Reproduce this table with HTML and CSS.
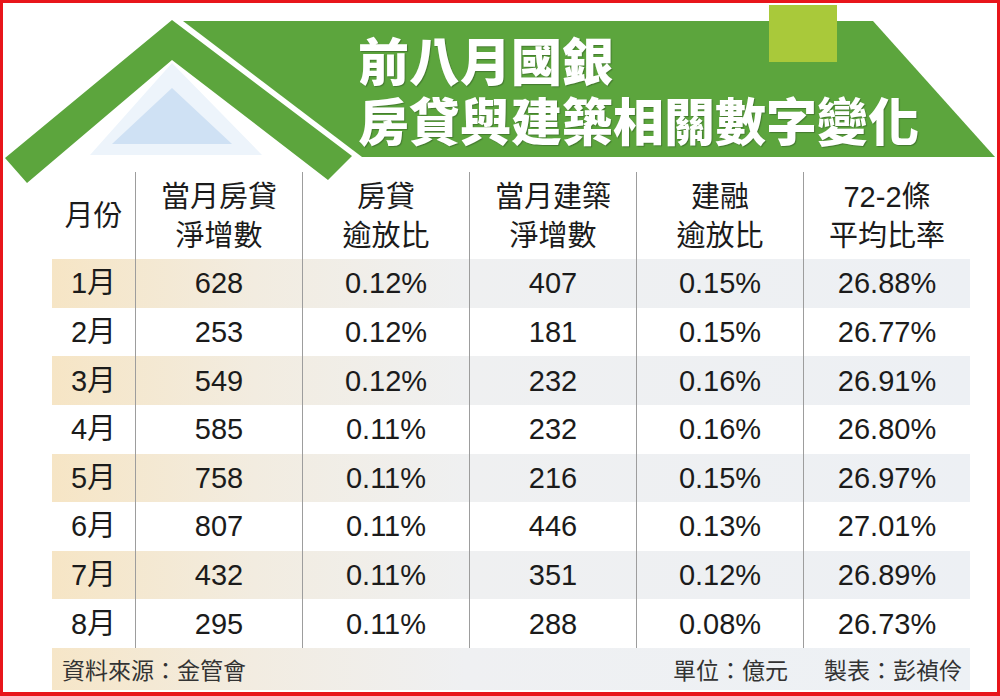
FILE: index.html
```html
<!DOCTYPE html>
<html lang="zh-Hant">
<head>
<meta charset="utf-8">
<title>前八月國銀房貸與建築相關數字變化</title>
<link rel="stylesheet" href="styles.css">
</head>
<body>
<div class="frame">
  <div class="hero">
    <svg class="roof" viewBox="3 3 994 169" width="994" height="169">
      <polygon class="banner" points="183,21 873,21 995,157 362,157"/>
      <rect class="chimney" x="769" y="5" width="68" height="57"/>
      <polygon class="band" points="5,158 172,20 352,156 328,180 172,60 27,183"/>
      <polygon class="glass-outer" points="172,63 262,155 90,155"/>
      <polygon class="glass-inner" points="172,88 232,144 112,144"/>
    </svg>
    <h1 class="title"><span class="line">前八月國銀</span><span class="line">房貸與建築相關數字變化</span></h1>
  </div>
  <div class="table">
    <div class="row head">
      <div class="cell">月份</div>
      <div class="cell">當月房貸<br>淨增數</div>
      <div class="cell">房貸<br>逾放比</div>
      <div class="cell">當月建築<br>淨增數</div>
      <div class="cell">建融<br>逾放比</div>
      <div class="cell">72-2條<br>平均比率</div>
    </div>
    <div class="row odd">
      <div class="cell">1月</div><div class="cell">628</div><div class="cell">0.12%</div><div class="cell">407</div><div class="cell">0.15%</div><div class="cell">26.88%</div>
    </div>
    <div class="row">
      <div class="cell">2月</div><div class="cell">253</div><div class="cell">0.12%</div><div class="cell">181</div><div class="cell">0.15%</div><div class="cell">26.77%</div>
    </div>
    <div class="row odd">
      <div class="cell">3月</div><div class="cell">549</div><div class="cell">0.12%</div><div class="cell">232</div><div class="cell">0.16%</div><div class="cell">26.91%</div>
    </div>
    <div class="row">
      <div class="cell">4月</div><div class="cell">585</div><div class="cell">0.11%</div><div class="cell">232</div><div class="cell">0.16%</div><div class="cell">26.80%</div>
    </div>
    <div class="row odd">
      <div class="cell">5月</div><div class="cell">758</div><div class="cell">0.11%</div><div class="cell">216</div><div class="cell">0.15%</div><div class="cell">26.97%</div>
    </div>
    <div class="row">
      <div class="cell">6月</div><div class="cell">807</div><div class="cell">0.11%</div><div class="cell">446</div><div class="cell">0.13%</div><div class="cell">27.01%</div>
    </div>
    <div class="row odd">
      <div class="cell">7月</div><div class="cell">432</div><div class="cell">0.11%</div><div class="cell">351</div><div class="cell">0.12%</div><div class="cell">26.89%</div>
    </div>
    <div class="row">
      <div class="cell">8月</div><div class="cell">295</div><div class="cell">0.11%</div><div class="cell">288</div><div class="cell">0.08%</div><div class="cell">26.73%</div>
    </div>
    <div class="foot">
      <span>資料來源：金管會</span>
      <span class="credits"><span>單位：億元</span><span>製表：彭禎伶</span></span>
    </div>
  </div>
</div>
</body>
</html>
```

FILE: styles.css
```css
html, body {
  margin: 0;
  padding: 0;
  background: #fff;
}

.frame {
  width: 1000px;
  height: 696px;
  box-sizing: border-box;
  border: 3px solid #e8151b;
  border-bottom-width: 4px;
  background: #fff;
  overflow: hidden;
  font-family: "Liberation Sans", "Noto Sans CJK TC", sans-serif;
  color: #1b1b1b;
}

.hero {
  display: grid;
  height: 169px;
}

.hero > * {
  grid-area: 1 / 1;
}

.roof {
  display: block;
  width: 994px;
  height: 169px;
  overflow: visible;
}

.banner { fill: #5ca53d; }
.chimney { fill: #a9c93a; }
.band { fill: #5ca53d; }
.glass-outer { fill: #edf4fb; }
.glass-inner { fill: #cfe1f4; }

.title {
  position: relative;
  margin: 0;
  padding: 29px 0 0 355px;
  display: flex;
  flex-direction: column;
  gap: 6px;
  font-family: "Noto Sans CJK TC", sans-serif;
  font-weight: 900;
  font-size: 51px;
  line-height: 54px;
  color: #fff;
  text-shadow: 1px 1px 1px rgba(40, 70, 30, 0.45);
  white-space: nowrap;
}

.title .line {
  display: block;
  height: 54px;
}

.table {
  margin-left: 49px;
  width: 918px;
}

.row {
  display: grid;
  grid-template-columns: 83px repeat(5, 167px);
  height: 48.625px;
}

.row.head {
  height: 87px;
}

.cell {
  display: flex;
  align-items: center;
  justify-content: center;
  text-align: center;
  font-size: 29px;
  line-height: 34px;
}

.cell + .cell {
  border-left: 1px solid #9d9d9d;
}

.head .cell {
  line-height: 39px;
  padding-top: 2px;
}

.odd {
  background: linear-gradient(to right, #f6e5c5 0%, #f2ece0 22%, #eff0f1 45%, #edf0f4 100%);
}

.foot {
  height: 42px;
  box-sizing: border-box;
  display: flex;
  justify-content: space-between;
  align-items: center;
  padding: 0 8px 0 10px;
  font-family: "Noto Sans CJK TC", sans-serif;
  font-size: 23px;
  color: #333;
  background: linear-gradient(to right, #f6e6c8 0%, #f2ece1 22%, #eff0f2 45%, #edf1f5 100%);
}

.credits {
  display: flex;
  gap: 36px;
}
```
